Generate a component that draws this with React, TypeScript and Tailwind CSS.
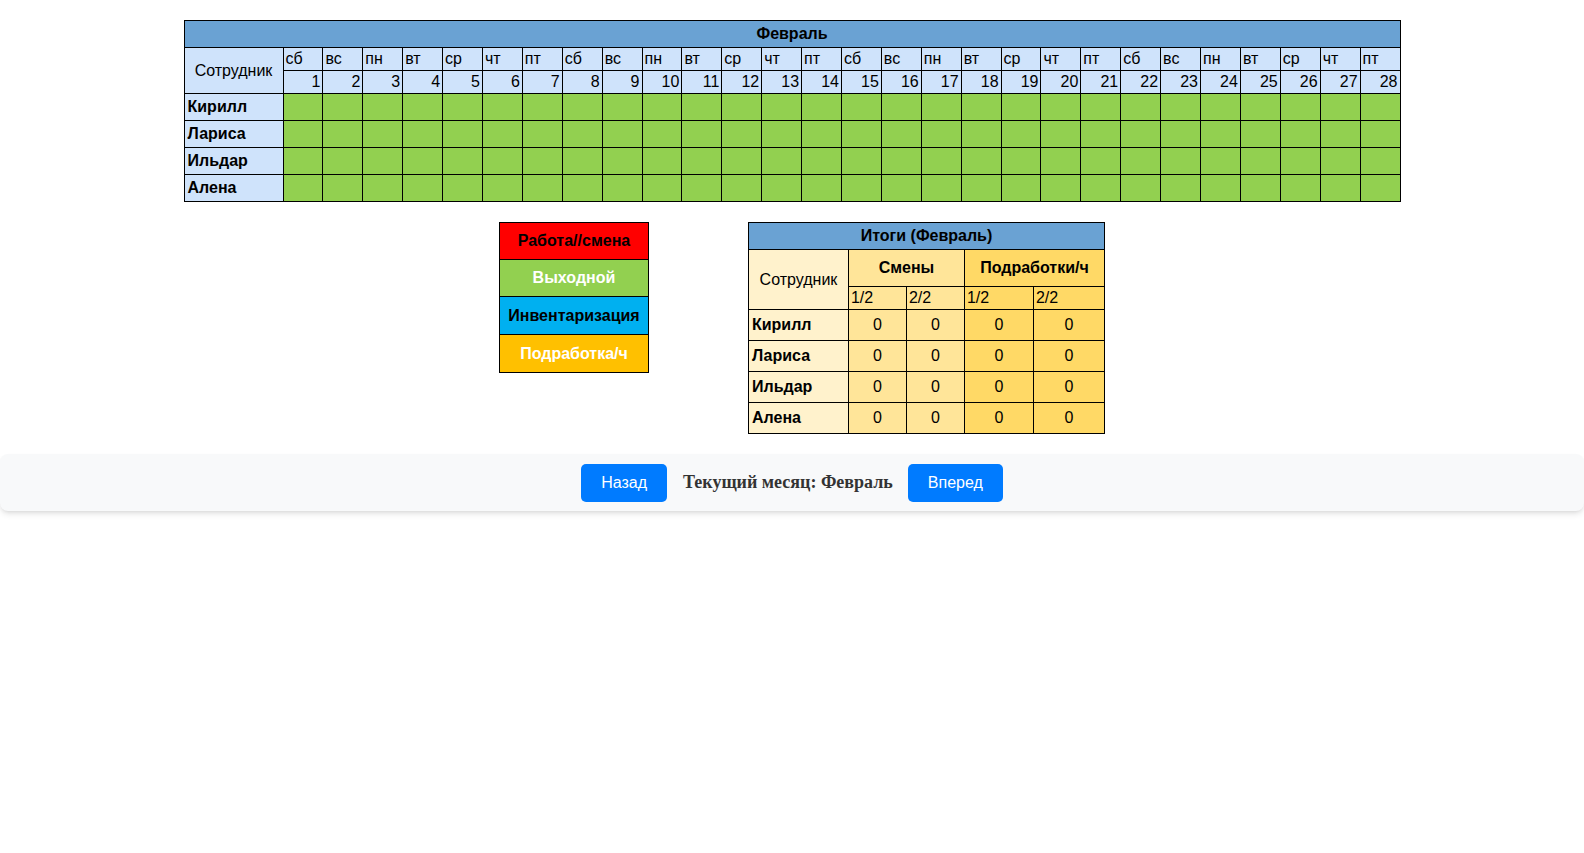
import React from "react";

const days = ["сб", "вс", "пн", "вт", "ср", "чт", "пт"];
const employees = ["Кирилл", "Лариса", "Ильдар", "Алена"];
const dates = Array.from({ length: 28 }, (_, i) => i + 1);

const cell = "border border-black p-0";

function Schedule() {
    return (
        <table className="mx-auto border-collapse table-fixed w-[1217px] text-[16px] text-black">
            <colgroup>
                <col className="w-[99px]" />
                {dates.map((d) => (
                    <col key={d} />
                ))}
            </colgroup>
            <thead>
                <tr className="h-[27px]">
                    <th colSpan={29} className={`${cell} bg-[#6aa2d3] font-bold text-center`}>Февраль</th>
                </tr>
                <tr className="h-[23px]">
                    <td rowSpan={2} className={`${cell} bg-[#cfe3fb] text-center`}>Сотрудник</td>
                    {dates.map((d) => (
                        <td key={d} className={`${cell} bg-[#cfe3fb] text-left pl-[2px] leading-none`}>
                            {days[(d - 1) % 7]}
                        </td>
                    ))}
                </tr>
                <tr className="h-[23px]">
                    {dates.map((d) => (
                        <td key={d} className={`${cell} bg-[#cfe3fb] text-right pr-[2px] leading-none`}>
                            {d}
                        </td>
                    ))}
                </tr>
            </thead>
            <tbody>
                {employees.map((name) => (
                    <tr key={name} className="h-[27px]">
                        <td className={`${cell} bg-[#cfe3fb] font-bold pl-[3px]`}>{name}</td>
                        {dates.map((d) => (
                            <td key={d} className={`${cell} bg-[#92d050]`}></td>
                        ))}
                    </tr>
                ))}
            </tbody>
        </table>
    );
}

function Legend() {
    return (
        <table className="border-collapse table-fixed w-[150px] text-[16px] font-bold text-center self-start">
            <tbody>
                <tr className="h-[37px]">
                    <td className={`${cell} bg-[#ff0000] text-black`}>Работа//смена</td>
                </tr>
                <tr className="h-[37px]">
                    <td className={`${cell} bg-[#92d050] text-white`}>Выходной</td>
                </tr>
                <tr className="h-[38px]">
                    <td className={`${cell} bg-[#00b0f0] text-black`}>Инвентаризация</td>
                </tr>
                <tr className="h-[38px]">
                    <td className={`${cell} bg-[#ffc000] text-white`}>Подработка/ч</td>
                </tr>
            </tbody>
        </table>
    );
}

function Totals() {
    return (
        <table className="border-collapse table-fixed w-[356px] text-[16px] text-black self-start">
            <colgroup>
                <col className="w-[100px]" />
                <col className="w-[58px]" />
                <col className="w-[58px]" />
                <col className="w-[69px]" />
                <col className="w-[71px]" />
            </colgroup>
            <thead>
                <tr className="h-[27px]">
                    <th colSpan={5} className={`${cell} bg-[#6aa2d3] font-bold text-center`}>Итоги (Февраль)</th>
                </tr>
                <tr className="h-[37px]">
                    <td rowSpan={2} className={`${cell} bg-[#fff2cc] text-center`}>Сотрудник</td>
                    <td colSpan={2} className={`${cell} bg-[#ffe599] font-bold text-center`}>Смены</td>
                    <td colSpan={2} className={`${cell} bg-[#ffd966] font-bold text-center`}>Подработки/ч</td>
                </tr>
                <tr className="h-[23px]">
                    <td className={`${cell} bg-[#ffe599] pl-[2px] leading-none`}>1/2</td>
                    <td className={`${cell} bg-[#ffe599] pl-[2px] leading-none`}>2/2</td>
                    <td className={`${cell} bg-[#ffd966] pl-[2px] leading-none`}>1/2</td>
                    <td className={`${cell} bg-[#ffd966] pl-[2px] leading-none`}>2/2</td>
                </tr>
            </thead>
            <tbody>
                {employees.map((name) => (
                    <tr key={name} className="h-[31px]">
                        <td className={`${cell} bg-[#fff2cc] font-bold pl-[3px]`}>{name}</td>
                        <td className={`${cell} bg-[#ffe599] text-center`}>0</td>
                        <td className={`${cell} bg-[#ffe599] text-center`}>0</td>
                        <td className={`${cell} bg-[#ffd966] text-center`}>0</td>
                        <td className={`${cell} bg-[#ffd966] text-center`}>0</td>
                    </tr>
                ))}
            </tbody>
        </table>
    );
}

export default function App() {
    return (
        <div className="min-h-screen bg-white font-['Liberation_Sans',Arial,sans-serif]">
            <div className="pt-5">
                <Schedule />
            </div>
            <div className="flex justify-center gap-[99px] pl-[20px] mt-5">
                <Legend />
                <Totals />
            </div>
            <div className="mt-5 bg-[#f8f9fa] rounded-lg shadow-md h-[57px] flex items-center justify-center">
                <button className="bg-[#007bff] text-white text-[16px] px-5 h-[38px] rounded-[5px]">Назад</button>
                <span className="ml-4 mr-[15px] font-['Liberation_Serif',serif] font-bold text-[18px] text-[#333]">
                    Текущий месяц: Февраль
                </span>
                <button className="bg-[#007bff] text-white text-[16px] px-5 h-[38px] rounded-[5px]">Вперед</button>
            </div>
        </div>
    );
}
